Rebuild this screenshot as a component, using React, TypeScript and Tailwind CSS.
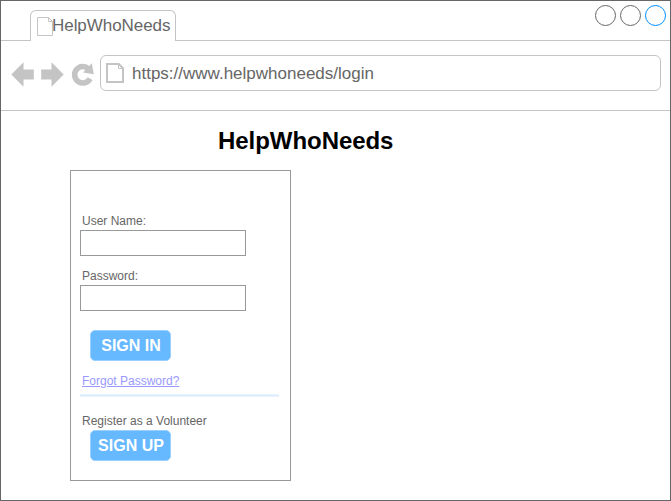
import type { ReactNode } from "react";

function Tab() {
  return (
    <div className="mt-[9px] flex h-[31px] w-[146px] items-center rounded-t-[6px] border border-b-0 border-[#c4c4c4] pl-[6px]">
      <svg className="h-5 w-[16px] shrink-0" viewBox="0 0 16 20" fill="none" stroke="#c4c4c4">
        <path d="M0.5 1.5H11.5L15.5 5.5V19.5H0.5Z" />
        <path d="M11.5 1.5V5.5H15.5" />
      </svg>
      <span className="-ml-px text-[17px] leading-5 tracking-[-0.05px] whitespace-nowrap">HelpWhoNeeds</span>
    </div>
  );
}

function TabBar() {
  return (
    <div className="flex h-10">
      <div className="w-[29px] border-b border-[#c4c4c4]" />
      <Tab />
      <div className="flex flex-1 justify-end gap-[4px] border-b border-[#c4c4c4] pt-[4px] pr-[4px]">
        <svg className="h-[21px] w-[21px]" viewBox="0 0 21 21" fill="none" stroke="#666666">
          <circle cx="10.5" cy="10.5" r="10" />
        </svg>
        <svg className="h-[21px] w-[21px]" viewBox="0 0 21 21" fill="none" stroke="#666666">
          <circle cx="10.5" cy="10.5" r="10" />
        </svg>
        <svg className="h-[21px] w-[21px]" viewBox="0 0 21 21" fill="none" stroke="#008cff">
          <circle cx="10.5" cy="10.5" r="10" />
        </svg>
      </div>
    </div>
  );
}

function Toolbar() {
  return (
    <div className="flex h-[70px] border-b border-[#c4c4c4] pt-[14px] pr-[9px] pl-[9px]">
      <svg className="h-[36px] w-[90px] shrink-0" viewBox="10 55 90 36" fill="#c4c4c4">
        <path d="M11.3 74.5L23.5 62.3V69.4H33.8V79.6H23.5V86.7Z" />
        <path d="M63.7 74.5L51.5 62.3V69.4H41.2V79.6H51.5V86.7Z" />
        <path
          d="M90.1 78.6A8.2 8.2 0 1 1 88.6 68.9"
          fill="none"
          stroke="#c4c4c4"
          strokeWidth="5.6"
        />
        <path d="M91.8 63.3L93.8 74.3L83 72.4Z" />
      </svg>
      <div className="flex h-[36px] flex-1 items-center rounded-[6px] border border-[#c4c4c4] pl-[5px]">
        <svg className="h-5 w-[18px] shrink-0" viewBox="0 0 18 20" fill="none" stroke="#c4c4c4">
          <path d="M1 1H12.8L17 5.2V19H1Z" strokeWidth="2" />
          <path d="M12.5 1V5.5H17" />
        </svg>
        <span className="mt-[2px] ml-[8px] text-[17px] leading-5">https://www.helpwhoneeds/login</span>
      </div>
    </div>
  );
}

function Field({ label, type }: { label: string; type: string }) {
  return (
    <label className="block h-[55px]">
      <span className="block h-[17px] pt-px pl-[2px] leading-[14px]">{label}</span>
      <input
        type={type}
        className="block h-[26px] w-[166px] border border-[#999999] bg-white px-2 outline-none"
      />
    </label>
  );
}

function ActionButton({ children }: { children: ReactNode }) {
  return (
    <button className="ml-[10px] block h-[31px] w-[81px] rounded-[5px] border border-[#99d0ff] bg-[#66b8ff] pl-px text-base leading-[29px] font-bold whitespace-nowrap text-white">
      {children}
    </button>
  );
}

export default function App() {
  return (
    <div className="h-[501px] w-[671px] overflow-hidden border border-[#666666] bg-white font-['Liberation_Sans',Arial,sans-serif] text-xs text-[#666666]">
      <TabBar />
      <Toolbar />
      <main>
        <h1 className="mt-[16px] ml-[217px] h-[28px] text-2xl leading-[28px] font-bold tracking-[-0.05px] text-black">
          HelpWhoNeeds
        </h1>
        <form className="mt-[15px] ml-[69px] h-[311px] w-[221px] border border-[#999999] pt-[42px] pl-[9px]">
          <Field label="User Name:" type="text" />
          <Field label="Password:" type="password" />
          <div className="mt-[7px]">
            <ActionButton>SIGN IN</ActionButton>
          </div>
          <a href="#" className="mt-[13px] ml-[2px] block h-[14px] leading-[14px] text-[#9999ff] underline">
            Forgot Password?
          </a>
          <div className="mt-[6px] h-[3px] w-[199px] border-y border-[#e9f4ff] bg-[#d9edff]" />
          <p className="mt-[17px] ml-[2px] h-[16px] leading-[14px]">Register as a Volunteer</p>
          <ActionButton>SIGN UP</ActionButton>
        </form>
      </main>
    </div>
  );
}
